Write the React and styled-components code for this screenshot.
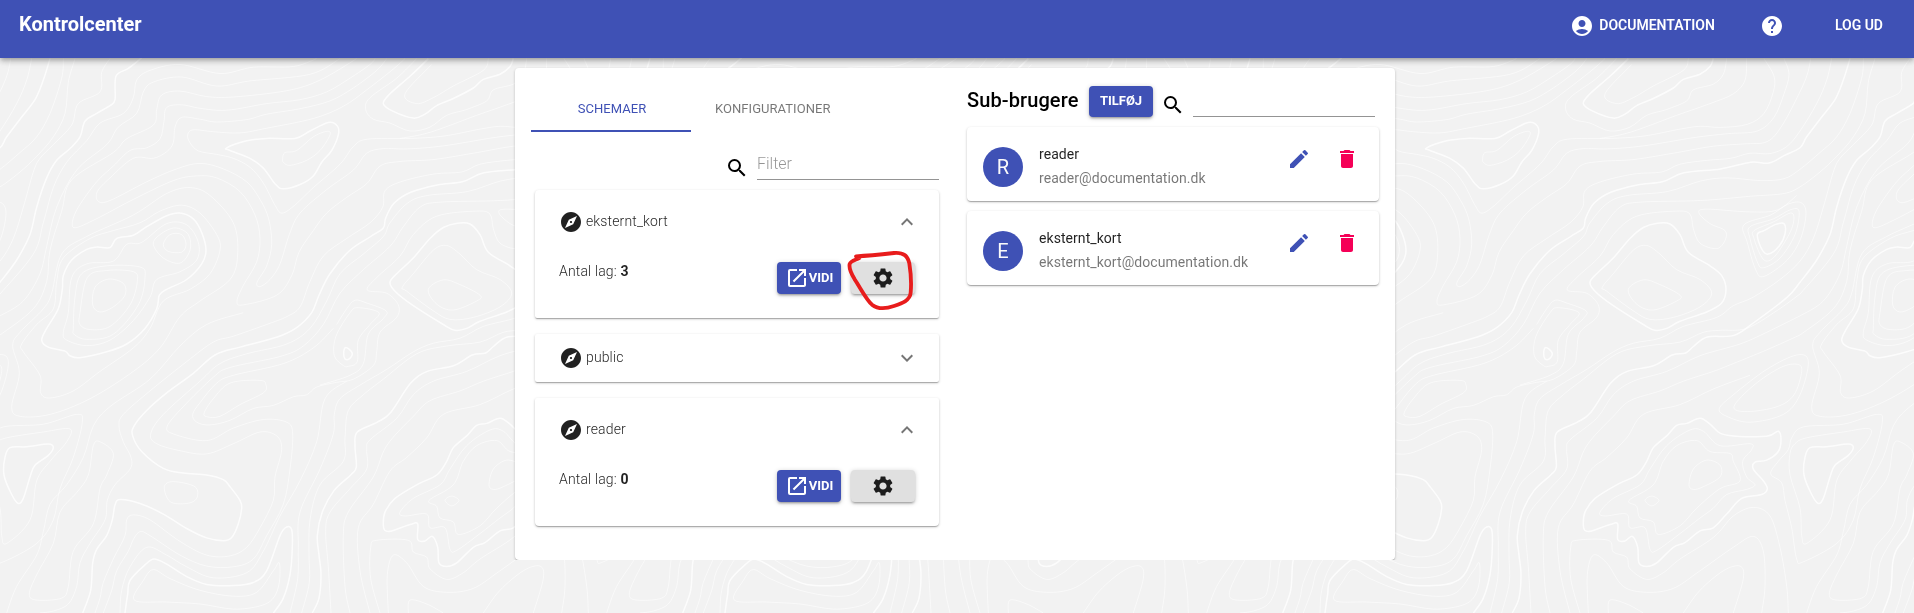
import React from "react";
import styled, { createGlobalStyle, css } from "styled-components";
import {
  MdSearch,
  MdExplore,
  MdOpenInNew,
  MdSettings,
  MdExpandLess,
  MdExpandMore,
  MdEdit,
  MdDelete,
  MdHelp,
  MdAccountCircle,
} from "react-icons/md";

const PRIMARY = "#3f51b5";
const SECONDARY = "#f50057";

const GlobalStyle = createGlobalStyle`
  *, *::before, *::after { box-sizing: border-box; }
  html, body { margin: 0; padding: 0; }
  body {
    background: #f2f2f2;
    color: #000;
    font-family: Roboto, "Liberation Sans", sans-serif;
    font-size: 14px;
    overflow: hidden;
  }
`;

/* ---------- Topographic backdrop ---------- */

// Contours are surveyed on a grid finer than the screen: units per pixel on each axis.
const UNIT_X = 3;
const UNIT_Y = 2.558;
const TILE_WIDTH = 600;

// A trailing "z" closes the contour.
const INDEX_CONTOURS = [
  "1950,150 1930,205 1905,255 1860,305 1820,350 1800,378 1752,398 1707,417 1652,415 1562,432 1452,442 1387,465 1312,473 1232,492 1182,520 1157,558 1150,583 1112,605 1050,640 990,700 957,755 935,800 890,838 832,862 720,888 645,908 580,955 500,1005 440,1050 402,1090 398,1115 425,1155 490,1198 550,1210 620,1215 670,1227 690,1245 720,1280 725,1300 715,1340 695,1375 670,1383 620,1376 560,1352 490,1315 420,1288 360,1278 345,1292 337,1330 320,1370 290,1405 278,1440 272,1510 248,1568",
  "2225,148 2185,175 2148,195 2145,255 2130,270 2090,290 2055,310 2040,350 2010,380 1970,410 1940,455 1910,530 1890,600 1850,665 1800,722 1762,760 1662,825 1602,858 1522,862 1482,885 1457,903 1417,908 1362,935 1282,950 1232,980 1172,1055 1132,1080 1072,1105 1065,1140 1069,1195 1052,1215 1002,1255 967,1310 952,1370 957,1420 963,1470 957,1530 937,1568",
  "680,378 740,360 800,354 885,354 930,335 985,313 1012,322 1015,345 995,385 965,415 940,450 900,472 850,483 825,470 790,430 750,405 690,385 z",
  "1285,150 1230,195 1170,240 1150,265 1180,285 1240,302 1275,292 1310,270 1360,252 1420,225 1450,203 1500,190 1530,170 1540,150",
  "540,545 580,560 605,595 618,640 605,675 560,715 500,740 478,755 470,790 435,840 380,880 320,900 240,915 210,910 195,898 145,888 125,870 140,840 175,790 187,740 190,705 215,665 260,638 290,632 330,633 350,610 400,602 440,580 500,552 z",
  "1372,571 1410,573 1440,600 1465,645 1530,680 1565,705 1578,740 1565,775 1520,798 1440,822 1400,840 1365,845 1330,830 1240,782 1185,745 1170,722 1190,700 1240,660 1290,610 1330,582 z",
  "1672,600 1692,590 1727,574 1752,572 1755,598 1737,630 1705,650 1685,637 z",
  "1035,890 1047,893 1057,905 1048,918 1035,918 1031,905 z",
  "15,1170 30,1145 80,1143 145,1136 160,1145 145,1165 105,1190 90,1220 70,1275 55,1288 35,1265 12,1215 z",
  "1150,1340 1155,1310 1185,1275 1250,1240 1310,1215 1340,1180 1360,1145 1400,1115 1430,1088 1460,1083 1500,1070 1530,1085 1560,1108 1600,1115 1700,1116 1735,1103 1743,1125 1735,1155 1700,1177 1665,1182 1660,1200 1690,1230 1702,1250 1685,1265 1625,1275 1580,1315 1540,1350 1500,1358 1455,1388 1420,1400 1370,1440 1340,1449 1317,1440 1313,1400 1297,1372 1275,1384 1253,1380 1253,1340 1230,1342 1175,1358 1155,1357 z",
  "820,1568 850,1530 870,1470 877,1400 875,1355 860,1348 840,1370 800,1460 760,1490 700,1498 620,1495 560,1475 500,1443 462,1430 435,1445 390,1485 383,1520 375,1568",
];

const CONTOURS = [
  "1692,150 1722,195 1720,235 1692,290 1642,318 1562,326 1502,323 1442,330 1332,348 1232,354 1102,356 1060,375 1020,420 940,480 880,528 845,545 825,525 790,468 750,428 700,405 650,395 595,386 570,365 563,345 580,332 640,337 720,340 800,328 940,303 1030,272 1100,230 1175,180 1215,150",
  "1752,150 1767,190 1752,240 1722,300 1672,335 1582,342 1482,352 1332,373 1222,381 1150,380 1100,392 1060,435 980,485 900,545 868,600 840,675 810,715 780,733 771,722 800,680 815,625 806,560 780,510 740,465 670,432 600,418 530,432 440,465 330,513 295,515 292,490 330,455 400,405 460,405 500,388 520,365 525,325 545,300 600,305 650,312 740,306 800,292 900,278 990,258 1060,225 1130,180 1160,150",
  "1832,150 1822,190 1797,240 1747,320 1702,362 1632,368 1540,374 1432,390 1302,408 1200,413 1140,425 1100,470 1040,505 980,545 940,590 897,645 875,705 830,755 730,780 711,770 730,730 770,670 780,610 765,550 720,490 650,455 590,450 520,462 400,510 300,555 230,582 217,570 235,530 290,465 340,425 390,385 440,378 480,355 492,310 500,275 545,268 600,277 680,282 800,265 900,255 980,235 1050,200 1110,165 1125,150",
  "1895,150 1880,205 1850,265 1800,335 1760,375 1710,393 1650,392 1592,405 1522,410 1440,420 1385,440 1302,445 1202,465 1155,488 1148,530 1110,570 1040,610 970,655 930,720 900,785 860,810 800,830 700,860 640,875 560,925 450,1000 370,1060 357,1090 370,1130 393,1170 390,1200 345,1240 322,1280 315,1330 270,1390 240,1440 230,1500 205,1545 160,1563 120,1568",
  "1990,150 1985,200 1950,290 1910,350 1860,390 1800,433 1752,457 1682,462 1582,455 1502,463 1402,490 1282,500 1222,520 1170,570 1150,605 1090,650 1020,700 980,770 930,840 860,880 740,905 660,930 600,975 490,1060 452,1110 470,1135 540,1153 620,1161 700,1135 780,1105 830,1115 845,1150 825,1220 820,1280 780,1350 740,1400 690,1422 620,1420 540,1385 450,1330 400,1317 380,1330 375,1370 340,1430 310,1490 300,1530 285,1568",
  "2025,150 2005,210 1995,290 1960,350 1910,400 1860,440 1800,478 1752,495 1652,502 1502,513 1322,517 1260,530 1210,580 1170,630 1090,690 1020,750 970,830 910,885 840,912 690,940 640,965 550,1040 502,1090 520,1110 620,1127 700,1095 790,1073 860,1080 878,1110 870,1200 850,1290 800,1370 760,1430 700,1450 620,1448 540,1420 450,1370 420,1360 400,1380 385,1410 350,1460 335,1510 310,1568",
  "2130,150 2105,185 2100,235 2035,265 2015,320 1960,370 1920,405 1900,440 1870,530 1840,610 1800,668 1740,715 1660,760 1600,782 1550,812 1450,835 1380,865 1300,878 1240,900 1160,945 1080,985 1020,1020 1003,1060 1000,1110 960,1200 900,1310 895,1400 893,1480 870,1568",
  "1790,500 1732,537 1650,542 1520,535 1497,545 1530,572 1575,590 1575,615 1550,636 1500,622 1480,585 1470,548 1430,540 1310,553 1240,600 1200,655 1130,710 1102,742 1160,750 1195,780 1190,812 1140,850 1130,900 1120,935 1060,970 1010,978 950,990 920,1010 880,1015 820,1037 760,1045 690,1075 630,1087 590,1080 578,1060 600,1030 650,980 700,960 850,930 940,890 1000,840",
  "1632,575 1712,550 1762,523 1802,518 1818,545 1802,610 1762,665 1692,707 1667,690 1642,620 z",
  "1650,580 1720,560 1770,537 1797,540 1785,600 1740,660 1690,685 1672,670 1650,610 z",
  "1662,590 1720,568 1776,545 1775,585 1730,650 1700,668 1680,650 1662,610 z",
  "1030,935 1003,910 1008,860 1050,800 1075,787 1137,800 1110,830 1075,870 1072,925 1045,937 z",
  "1010,830 1040,790 1065,768 1100,775 1158,795 1150,815 1105,855 1090,930 1050,960 960,985",
  "613,1055 640,1020 690,980 780,973 798,985 790,1005 720,1035 660,1065 620,1066 z",
  "848,405 855,390 890,385 940,350 980,336 990,345 960,385 920,410 870,423 850,415 z",
  "1295,165 1215,240 1250,265 1300,250 1360,220 1450,180 1465,150",
  "1250,150 1190,200 1110,250 1097,280 1120,305 1170,315 1230,335 1290,325 1340,295 1400,280 1460,258 1480,230 1540,215 1570,190 1580,150",
  "1640,150 1635,205 1600,240 1530,265 1430,295 1320,330 1260,345 1200,354",
  "950,150 880,170 760,172 660,188 540,165 450,180 410,205 400,250 370,290 300,315 260,360 200,415 160,480 130,570 100,650 0,752",
  "1020,150 930,190 750,207 650,220 545,197 460,210 430,235 410,290 355,325 320,370 230,435 170,530 140,630 120,700 70,770 0,808",
  "1070,150 960,205 860,232 700,248 620,247 540,233 485,243 470,280 460,320 380,355 340,390 215,460 185,540 150,640 140,720 100,790 0,857",
  "1800,752 1730,795 1640,840 1560,845 1510,850 1440,875 1340,885 1250,905 1150,970 1090,1010 1045,1050 1035,1120 1030,1180 960,1240 930,1330 927,1420 928,1490 905,1568",
  "1800,808 1700,850 1620,880 1500,910 1400,950 1300,975 1240,1010 1190,1070 1110,1125 1100,1150 1100,1200 1050,1250 990,1310 977,1360 985,1450 993,1568",
  "1800,857 1700,895 1600,930 1540,950 1450,975 1380,1000 1290,1025 1240,1065 1160,1140 1120,1220 1045,1310 1030,1370 1035,1500 1050,1568",
  "1650,960 1540,995 1440,1035 1330,1060 1280,1120 1220,1170 1170,1205 1120,1290 1075,1350 1080,1460 1110,1568",
  "545,525 600,545 650,600 660,640 630,700 570,740 490,770 450,840 400,890 300,950 220,1000 150,1018 122,1005 120,960 70,900 65,880 110,830 160,790 170,720 190,660 270,610 340,590 420,570 480,540 z",
  "570,480 630,500 700,570 713,650 690,715 600,770 540,810 480,890 400,950 270,1020 150,1060 60,1065 35,1040 58,955 38,885 60,850 130,790 155,750 185,650 260,605 400,550 500,495 z",
  "325,714 370,725 375,755 340,785 300,798 278,780 285,735 z",
  "240,830 240,800 262,710 320,692 400,695 412,720 390,780 330,835 270,843 z",
  "220,840 225,760 245,700 320,680 420,683 435,710 415,780 340,855 260,868 222,855 z",
  "190,850 205,800 215,710 260,675 340,668 380,625 425,620 500,572 560,575 595,620 590,665 540,695 470,715 450,760 400,820 330,870 260,884 200,870 z",
  "490,625 510,600 545,600 558,625 545,645 505,643 z",
  "460,625 480,600 525,583 565,600 570,640 540,673 490,660 z",
  "1207,735 1240,700 1300,640 1340,628 1380,650 1430,690 1500,715 1535,750 1500,785 1420,812 1350,817 1300,795 1220,745 z",
  "1285,740 1330,716 1380,728 1440,755 1430,770 1360,793 1310,778 z",
  "1602,1040 1662,985 1742,940 1792,932 1805,950 1782,1010 1732,1040 1642,1053 z",
  "1558,1045 1600,1010 1700,945 1790,908 1825,925 1800,1010 1750,1060 1650,1080 1580,1065 z",
  "1712,1212 1745,1235 1755,1280 1775,1350 1790,1430 1810,1437 1910,1390 1960,1330 1980,1250 2020,1170 2047,1080 2030,1060 1930,1085 1810,1092 1775,1120 1765,1150 1735,1180 z",
  "1770,1160 1785,1135 1820,1120 1930,1105 2010,1097 2000,1130 1950,1180 1910,1230 1890,1330 1820,1390 1805,1370 1800,1300 1770,1215 z",
  "300,1130 340,1160 320,1215 300,1250 280,1340 220,1410 205,1500 185,1530 110,1535 88,1520 110,1470 160,1390 180,1310 230,1260 265,1215 280,1140 z",
  "730,800 620,830 540,885 450,970 330,1040 280,1090 250,1170 200,1240 150,1290 130,1360 110,1420 50,1500 20,1568",
  "493,1245 520,1232 585,1245 590,1275 560,1288 510,1283 z",
  "460,1457 510,1480 600,1510 700,1525 770,1515 820,1460 838,1440 838,1490 820,1530 780,1550 700,1558 600,1545 500,1540 403,1535 430,1485 z",
  "360,1568 365,1510 390,1450 440,1400 500,1420 560,1450 640,1478 740,1465 790,1410 840,1320 900,1230 950,1130 975,1020 1040,975",
  "1200,1310 1240,1275 1320,1240 1350,1200 1400,1140 1470,1100 1510,1103 1560,1140 1650,1135 1655,1150 1628,1180 1640,1220 1665,1240 1640,1252 1580,1265 1540,1300 1500,1325 1440,1365 1370,1408 1350,1405 1335,1350 1290,1350 1280,1315 1215,1320 z",
  "1287,1280 1360,1240 1390,1180 1430,1140 1490,1127 1530,1155 1590,1160 1600,1180 1620,1230 1560,1250 1490,1300 1440,1345 1375,1367 1360,1335 1320,1325 1310,1295 z",
  "1467,1240 1480,1200 1520,1177 1560,1190 1560,1220 1510,1245 1480,1252 z",
  "1335,1280 1355,1269 1377,1280 1355,1294 z",
  "1140,1568 1112,1480 1112,1400 1130,1382 1225,1382 1240,1412 1280,1425 1290,1455 1340,1482 1390,1465 1440,1430 1540,1375 1600,1320 1660,1298 1710,1320 1740,1400 1760,1500 1765,1568",
  "1165,1568 1162,1470 1180,1420 1220,1440 1270,1500 1340,1515 1420,1505 1500,1460 1600,1400 1660,1372 1690,1410 1695,1500 1685,1568",
  "1225,1568 1230,1535 1280,1545 1330,1568",
  "1450,1568 1500,1510 1570,1460 1620,1448 1630,1480 1600,1568",
];

// Catmull-Rom spline through the survey points, written as cubic Béziers.
function contourPath(source) {
  const closed = source.endsWith("z");
  const pts = source
    .replace(" z", "")
    .split(" ")
    .map((pair) => {
      const [x, y] = pair.split(",").map(Number);
      return [x / UNIT_X, y / UNIT_Y];
    });
  const n = pts.length;
  const at = (i) => (closed ? pts[(i + n) % n] : pts[Math.max(0, Math.min(n - 1, i))]);
  let d = `M${pts[0][0].toFixed(1)} ${pts[0][1].toFixed(1)}`;
  for (let i = 0; i < (closed ? n : n - 1); i += 1) {
    const [a, b, c, e] = [at(i - 1), at(i), at(i + 1), at(i + 2)];
    const c1 = [b[0] + (c[0] - a[0]) / 6, b[1] + (c[1] - a[1]) / 6];
    const c2 = [c[0] - (e[0] - b[0]) / 6, c[1] - (e[1] - b[1]) / 6];
    d += `C${[...c1, ...c2, ...c].map((v) => v.toFixed(1)).join(" ")}`;
  }
  return closed ? `${d}Z` : d;
}

const INDEX_PATH = INDEX_CONTOURS.map(contourPath).join("");
const THIN_PATH = CONTOURS.map(contourPath).join("");

const BackdropSvg = styled.svg`
  position: fixed;
  inset: 0;
  width: 100%;
  height: 100%;
  z-index: -1;
  fill: none;
  stroke: #fff;
`;

function Backdrop() {
  return (
    <BackdropSvg aria-hidden="true">
      <defs>
        <g id="topography">
          <path d={THIN_PATH} strokeWidth="0.9" opacity="0.62" />
          <path d={INDEX_PATH} strokeWidth="1.5" opacity="0.78" />
        </g>
      </defs>
      {[-1, 0, 1, 2, 3].map((tile) => (
        <use key={tile} href="#topography" x={tile * TILE_WIDTH} />
      ))}
    </BackdropSvg>
  );
}

/* ---------- App bar ---------- */

const AppBar = styled.header`
  display: flex;
  justify-content: space-between;
  height: 58px;
  padding: 0 31px 0 19px;
  color: #fff;
  background: ${PRIMARY};
  box-shadow: 0 2px 4px -1px rgba(0, 0, 0, 0.2), 0 4px 5px 0 rgba(0, 0, 0, 0.14),
    0 1px 10px 0 rgba(0, 0, 0, 0.12);
`;

const Brand = styled.h1`
  margin: 8px 0 0;
  font-size: 20px;
  font-weight: 700;
  line-height: 32px;
`;

const Nav = styled.nav`
  display: flex;
  align-items: center;
  height: 50px;
`;

const NavItem = styled.a`
  display: flex;
  align-items: center;
  gap: 5px;
  margin-left: ${(p) => p.$before || 0}px;
  font-size: 14px;
  font-weight: 600;
  line-height: 24px;
  text-transform: uppercase;
  white-space: nowrap;

  svg {
    position: relative;
    top: 1px;
  }
`;

/* ---------- Surfaces ---------- */

const elevation = css`
  background: #fff;
  box-shadow: 0 1px 3px 0 rgba(0, 0, 0, 0.2), 0 1px 1px 0 rgba(0, 0, 0, 0.14),
    0 2px 1px -1px rgba(0, 0, 0, 0.12);
`;

const Board = styled.main`
  ${elevation}
  display: flex;
  gap: 28px;
  width: 880px;
  height: 492px;
  margin: 10px 0 0 515px;
  padding: 16px 16px 0;
  border-radius: 4px;
`;

const SchemaColumn = styled.section`
  width: 408px;
`;

const UserColumn = styled.section`
  width: 412px;
`;

const Tabs = styled.div`
  display: flex;
  height: 48px;
`;

const Tab = styled.button`
  min-width: 160px;
  padding: 4px 22px 0 24px;
  border: 0;
  border-bottom: 2px solid ${(p) => (p.$active ? PRIMARY : "transparent")};
  background: none;
  color: ${(p) => (p.$active ? PRIMARY : "rgba(0, 0, 0, 0.54)")};
  font: 400 13px/18px Roboto, sans-serif;
  letter-spacing: 0.05px;
  text-transform: uppercase;
`;

/* ---------- Fields and buttons ---------- */

const SearchRow = styled.div`
  display: flex;
  justify-content: flex-end;
  gap: 8px;
  padding-top: 16px;
  margin-bottom: 10px;
`;

const SearchIcon = styled(MdSearch)`
  width: 24px;
  height: 24px;
  margin-top: 8px;
`;

const Field = styled.input`
  width: 182px;
  height: 32px;
  padding: 0 0 1px;
  border: 0;
  border-bottom: 1px solid rgba(0, 0, 0, 0.42);
  outline: 0;
  background: none;
  font: 300 16px/19px Roboto, sans-serif;

  &::placeholder {
    color: rgba(0, 0, 0, 0.42);
    opacity: 1;
  }
`;

const Button = styled.button`
  display: flex;
  align-items: center;
  justify-content: center;
  width: 64px;
  height: ${(p) => p.$height || 32}px;
  padding: 0 0 ${(p) => p.$lift || 0}px;
  border: 0;
  border-radius: 4px;
  background: ${(p) => (p.$neutral ? "#e0e0e0" : PRIMARY)};
  color: ${(p) => (p.$neutral ? "rgba(0, 0, 0, 0.87)" : "#fff")};
  font: 700 13px/24px Roboto, sans-serif;
  text-transform: uppercase;
  box-shadow: 0 1px 5px 0 rgba(0, 0, 0, 0.2), 0 2px 2px 0 rgba(0, 0, 0, 0.14),
    0 3px 1px -2px rgba(0, 0, 0, 0.12);
`;

/* ---------- Schema cards ---------- */

const SchemaList = styled.div`
  display: flex;
  flex-direction: column;
  gap: 16px;
  width: 404px;
  margin-left: 4px;
`;

const SchemaCard = styled.article`
  ${elevation}
  height: ${(p) => (p.$open ? 128 : 48)}px;
  padding: ${(p) => (p.$open ? 20 : 12)}px 20px 0 24px;
  border-radius: ${(p) => p.$radius};
`;

const SchemaHead = styled.div`
  display: flex;
  align-items: center;
  height: 24px;
  color: rgba(0, 0, 0, 0.87);

  svg:last-child {
    color: rgba(0, 0, 0, 0.54);
  }
`;

const SchemaName = styled.span`
  flex: 1;
  margin: -2px 0 0 3px;
  font-size: 14px;
  font-weight: 300;
  letter-spacing: 0.13px;
  line-height: 20px;
`;

const SchemaBody = styled.div`
  display: flex;
  justify-content: space-between;
  padding: 28px 4px 0 0;
`;

const LayerCount = styled.span`
  font-size: 14px;
  font-weight: 300;
  letter-spacing: 0.15px;
  line-height: 18px;
  color: rgba(0, 0, 0, 0.87);

  b {
    font-weight: 700;
  }
`;

const Actions = styled.div`
  display: flex;
  gap: 10px;
`;

const GearSlot = styled.div`
  position: relative;
`;

const Scribble = styled.svg`
  position: absolute;
  left: -6px;
  top: -14px;
  width: 70px;
  height: 64px;
  overflow: visible;
  fill: none;
  stroke: #e81c1c;
  stroke-width: 11.5;
  stroke-linecap: round;
  stroke-linejoin: round;
`;

function Schema({ name, layers, open, marked, radius }) {
  return (
    <SchemaCard $open={open} $radius={radius}>
      <SchemaHead>
        <MdExplore size={24} />
        <SchemaName>{name}</SchemaName>
        {open ? <MdExpandLess size={24} /> : <MdExpandMore size={24} />}
      </SchemaHead>
      {open && (
        <SchemaBody>
          <LayerCount>
            Antal lag: <b>{layers}</b>
          </LayerCount>
          <Actions>
            <Button>
              <MdOpenInNew size={24} />
              Vidi
            </Button>
            <GearSlot>
              <Button $neutral>
                <MdSettings size={24} />
              </Button>
              {marked && (
                <Scribble viewBox="225 24 210 192">
                  <path d="M258 49 C300 47 345 42 372 39 C402 37 413 48 418 70 C422 95 425 125 422 158 C420 182 396 190 372 198 C352 205 325 209 306 194 C288 178 272 145 254 118 C243 100 236 86 239 72 C242 62 256 60 268 54" />
                </Scribble>
              )}
            </GearSlot>
          </Actions>
        </SchemaBody>
      )}
    </SchemaCard>
  );
}

/* ---------- Users ---------- */

const UserToolbar = styled.div`
  display: flex;
  height: 43px;
`;

const Heading = styled.h2`
  width: 122px;
  margin: 0;
  font-size: 20px;
  font-weight: 500;
  letter-spacing: 0.1px;
  line-height: 32px;
  white-space: nowrap;
`;

const UserSearch = styled.div`
  display: flex;
  gap: 8px;
  margin-left: 8px;

  ${SearchIcon} {
    margin-top: 9px;
  }

  ${Field} {
    height: 33px;
  }
`;

const AddSlot = styled.div`
  padding-top: 2px;
`;

const UserList = styled.div`
  display: flex;
  flex-direction: column;
  gap: 10px;
`;

const UserCard = styled.article`
  ${elevation}
  display: flex;
  height: 74px;
  padding: 20px 20px 0 16px;
  border-radius: 4px;
`;

const Avatar = styled.div`
  width: 40px;
  height: 40px;
  border-radius: 50%;
  background: ${PRIMARY};
  color: #fafafa;
  font-size: 20px;
  line-height: 41px;
  text-align: center;
`;

const Identity = styled.div`
  flex: 1;
  margin: -5px 0 0 16px;
  font-size: 14px;
  letter-spacing: 0.06px;
  line-height: 24px;
`;

const UserName = styled.div`
  color: rgba(0, 0, 0, 0.87);
`;

const Email = styled.div`
  color: rgba(0, 0, 0, 0.54);
`;

const UserActions = styled.div`
  display: flex;
  gap: 24px;
`;

function User({ name, email }) {
  return (
    <UserCard>
      <Avatar>{name[0].toUpperCase()}</Avatar>
      <Identity>
        <UserName>{name}</UserName>
        <Email>{email}</Email>
      </Identity>
      <UserActions>
        <MdEdit size={24} color={PRIMARY} />
        <MdDelete size={24} color={SECONDARY} />
      </UserActions>
    </UserCard>
  );
}

export default function App() {
  return (
    <>
      <GlobalStyle />
      <Backdrop />
      <AppBar>
        <Brand>Kontrolcenter</Brand>
        <Nav>
          <NavItem>
            <MdAccountCircle size={24} />
            Documentation
          </NavItem>
          <NavItem $before={45}>
            <MdHelp size={24} />
          </NavItem>
          <NavItem $before={51}>Log ud</NavItem>
        </Nav>
      </AppBar>
      <Board>
        <SchemaColumn>
          <Tabs>
            <Tab $active>Schemaer</Tab>
            <Tab>Konfigurationer</Tab>
          </Tabs>
          <SearchRow>
            <SearchIcon />
            <Field placeholder="Filter" />
          </SearchRow>
          <SchemaList>
            <Schema name="eksternt_kort" layers={3} open marked radius="4px 4px 2px 2px" />
            <Schema name="public" layers={0} radius="2px" />
            <Schema name="reader" layers={0} open radius="2px 2px 4px 4px" />
          </SchemaList>
        </SchemaColumn>
        <UserColumn>
          <UserToolbar>
            <Heading>Sub-brugere</Heading>
            <AddSlot>
              <Button $height={31} $lift={2}>
                Tilføj
              </Button>
            </AddSlot>
            <UserSearch>
              <SearchIcon />
              <Field />
            </UserSearch>
          </UserToolbar>
          <UserList>
            <User name="reader" email="reader@documentation.dk" />
            <User name="eksternt_kort" email="eksternt_kort@documentation.dk" />
          </UserList>
        </UserColumn>
      </Board>
    </>
  );
}
